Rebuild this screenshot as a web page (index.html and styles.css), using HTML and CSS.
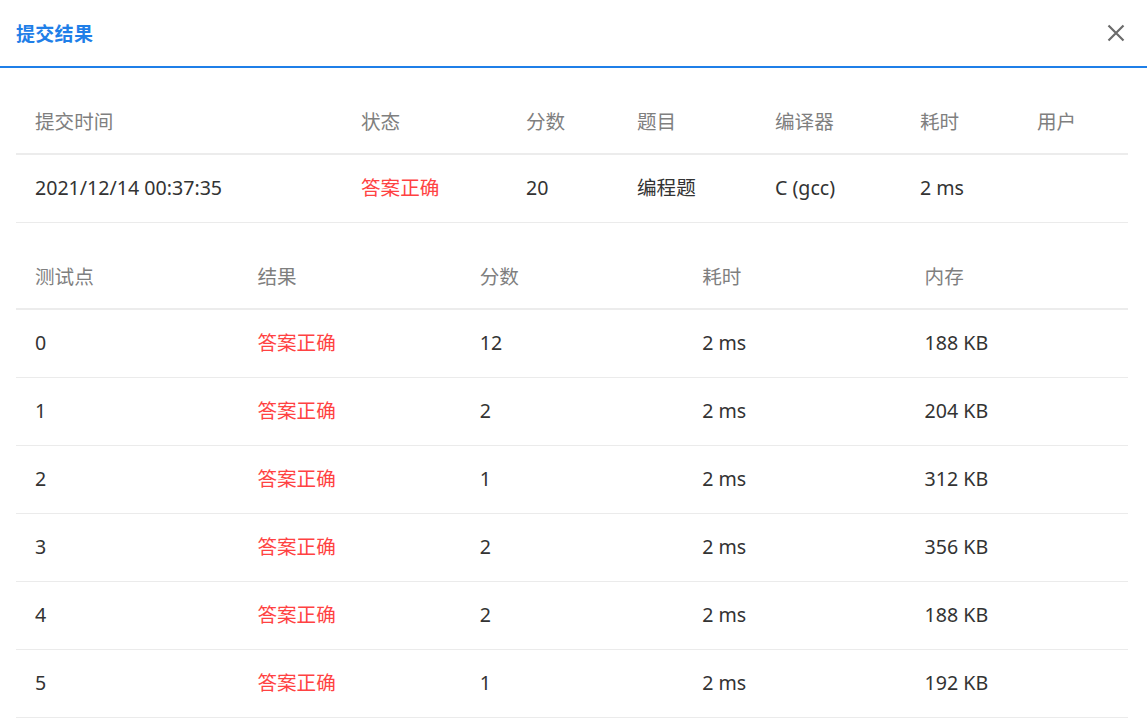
FILE: index.html
```html
<!DOCTYPE html>
<html lang="zh">
<head>
<meta charset="utf-8">
<link rel="stylesheet" href="styles.css">
</head>
<body>
<div class="dialog">
  <div class="header">
    <div class="title">提交结果</div>
    <button class="close" aria-label="关闭">
      <svg width="18" height="18" viewBox="0 0 18 18"><path d="M1.5 1.5 L16.5 16.5 M16.5 1.5 L1.5 16.5" stroke="#6b6b6b" stroke-width="2.2" fill="none"/></svg>
    </button>
  </div>
  <div class="body">
    <table class="tbl t1">
      <colgroup><col style="width:326px"><col style="width:165px"><col style="width:111px"><col style="width:138px"><col style="width:145px"><col style="width:117px"><col></colgroup>
      <thead><tr><th>提交时间</th><th>状态</th><th>分数</th><th>题目</th><th>编译器</th><th>耗时</th><th>用户</th></tr></thead>
      <tbody><tr><td>2021/12/14 00:37:35</td><td class="ok">答案正确</td><td>20</td><td>编程题</td><td>C (gcc)</td><td>2 ms</td><td></td></tr></tbody>
    </table>
    <table class="tbl t2">
      <thead><tr><th>测试点</th><th>结果</th><th>分数</th><th>耗时</th><th>内存</th></tr></thead>
      <tbody>
        <tr><td>0</td><td class="ok">答案正确</td><td>12</td><td>2 ms</td><td>188 KB</td></tr>
        <tr><td>1</td><td class="ok">答案正确</td><td>2</td><td>2 ms</td><td>204 KB</td></tr>
        <tr><td>2</td><td class="ok">答案正确</td><td>1</td><td>2 ms</td><td>312 KB</td></tr>
        <tr><td>3</td><td class="ok">答案正确</td><td>2</td><td>2 ms</td><td>356 KB</td></tr>
        <tr><td>4</td><td class="ok">答案正确</td><td>2</td><td>2 ms</td><td>188 KB</td></tr>
        <tr><td>5</td><td class="ok">答案正确</td><td>1</td><td>2 ms</td><td>192 KB</td></tr>
      </tbody>
    </table>
  </div>
</div>
</body>
</html>
```
FILE: styles.css
```css
html, body {
  margin: 0;
  padding: 0;
  background: #fff;
}
body {
  font-family: "Noto Sans", "Noto Sans CJK SC", sans-serif;
  color: #333;
  overflow: hidden;
}
.dialog {
  width: 1147px;
}
.header {
  height: 66px;
  border-bottom: 2px solid #1f7fe8;
  display: flex;
  align-items: center;
  justify-content: space-between;
  padding: 0 16px;
}
.title {
  font-size: 19px;
  font-weight: 700;
  color: #1f7fe8;
  letter-spacing: 0.3px;
}
.close {
  border: 0;
  background: none;
  padding: 0;
  width: 18px;
  height: 18px;
  margin-right: 6px;
  display: flex;
  cursor: pointer;
}
.body {
  padding: 19px 19px 0 16px;
}
.tbl {
  width: 1112px;
  border-collapse: collapse;
  table-layout: fixed;
  font-size: 19.6px;
  line-height: 26px;
}
.tbl th, .tbl td {
  padding: 0 0 0 19px;
  text-align: left;
  border-bottom: 1px solid #ebebeb;
  white-space: nowrap;
  vertical-align: middle;
}
.tbl th {
  font-weight: 400;
  color: #7f7f7f;
  border-bottom: 2px solid #ececec;
  height: 63px;
  padding-top: 3px;
}
.tbl td {
  color: #333;
  height: 65px;
  padding-bottom: 2px;
}
.tbl td.ok {
  color: #ff4242;
}
.t2 {
  margin-top: 19px;
}
```
